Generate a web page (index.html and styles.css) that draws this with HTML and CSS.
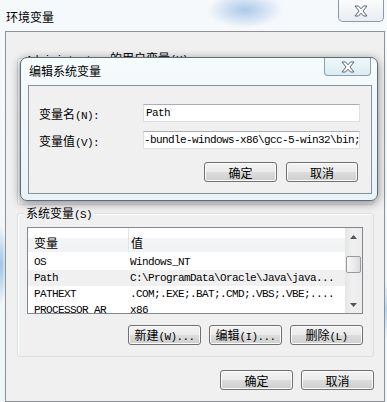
FILE: index.html
```html
<!DOCTYPE html>
<html lang="zh-CN">

<head>
    <meta charset="UTF-8">
    <title>环境变量</title>
    <link rel="stylesheet" href="styles.css">
</head>

<body>
    <div class="window">
        <div class="titlebar">
            <span class="title">环境变量</span>
            <div class="close-btn">
                <svg width="14" height="12" viewBox="0 0 14 12">
                    <polygon points="1,1 4.5,1 7,3.8 9.5,1 13,1 9,6 13,11 9.5,11 7,8.2 4.5,11 1,11 5,6" fill="#fff" stroke="#5a6470" stroke-width="1" stroke-linejoin="round" />
                </svg>
            </div>
        </div>

        <div class="client">
            <!-- 用户变量 (被对话框挡住) -->
            <div class="group user-group">
                <span class="legend"><span class="en">Administrator </span>的用户变量<span class="en">(U)</span></span>
            </div>

            <div class="group sys-group">
                <span class="legend">系统变量<span class="en">(S)</span></span>
                <div class="listview">
                    <div class="lv-body">
                        <div class="lv-head">
                            <div class="col-name">变量</div>
                            <div class="col-value">值</div>
                        </div>
                        <div class="lv-rows">
                            <div class="lv-row">
                                <div class="col-name">OS</div>
                                <div class="col-value">Windows_NT</div>
                            </div>
                            <div class="lv-row hot">
                                <div class="col-name">Path</div>
                                <div class="col-value">C:\ProgramData\Oracle\Java\java...</div>
                            </div>
                            <div class="lv-row">
                                <div class="col-name">PATHEXT</div>
                                <div class="col-value">.COM;.EXE;.BAT;.CMD;.VBS;.VBE;....</div>
                            </div>
                            <div class="lv-row">
                                <div class="col-name">PROCESSOR_AR</div>
                                <div class="col-value">x86</div>
                            </div>
                        </div>
                    </div>
                    <div class="scrollbar">
                        <div class="sb-arrow">
                            <svg width="7" height="4" viewBox="0 0 7 4"><polygon points="0,4 3.5,0 7,4" fill="#555" /></svg>
                        </div>
                        <div class="sb-track">
                            <div class="sb-thumb"></div>
                        </div>
                        <div class="sb-arrow">
                            <svg width="7" height="4" viewBox="0 0 7 4"><polygon points="0,0 3.5,4 7,0" fill="#555" /></svg>
                        </div>
                    </div>
                </div>
                <div class="btn-row">
                    <button class="btn">新建<span class="en">(W)...</span></button>
                    <button class="btn">编辑<span class="en">(I)...</span></button>
                    <button class="btn">删除<span class="en">(L)</span></button>
                </div>
            </div>

            <div class="btn-row main-btns">
                <button class="btn">确定</button>
                <button class="btn">取消</button>
            </div>
        </div>

        <!-- 编辑系统变量 对话框 -->
        <div class="dialog">
            <div class="dlg-titlebar">
                <span class="dlg-title">编辑系统变量</span>
                <div class="dlg-close">
                    <svg width="14" height="12" viewBox="0 0 14 12">
                        <polygon points="1,1 4.5,1 7,3.8 9.5,1 13,1 9,6 13,11 9.5,11 7,8.2 4.5,11 1,11 5,6" fill="#fff" stroke="#5a6470" stroke-width="1" stroke-linejoin="round" />
                    </svg>
                </div>
            </div>
            <div class="dlg-client">
                <div class="field first">
                    <label>变量名<span class="en">(N):</span></label>
                    <div class="textbox">Path</div>
                </div>
                <div class="field">
                    <label>变量值<span class="en">(V):</span></label>
                    <div class="textbox scrolled"><span>-bundle-windows-x86\gcc-5-win32\bin;</span></div>
                </div>
                <div class="btn-row dlg-btns">
                    <button class="btn">确定</button>
                    <button class="btn narrow">取消</button>
                </div>
            </div>
        </div>
    </div>
</body>

</html>
```

FILE: styles.css
```css
body {
    margin: 0;
    width: 387px;
    height: 402px;
    overflow: hidden;
    font-family: "Noto Sans CJK SC", sans-serif;
    font-size: 12px;
    color: #000;
    background:
        radial-gradient(ellipse 38px 18px at 245px 10px, rgba(110, 160, 220, 0.55), transparent),
        radial-gradient(ellipse 6px 40px at 1px 265px, rgba(90, 150, 215, 0.55), transparent),
        radial-gradient(ellipse 6px 30px at 386px 310px, rgba(120, 180, 230, 0.5), transparent),
        linear-gradient(#f6f9fb, #eef6f9);
}

/* 半角字符, 模仿宋体 */
.en {
    font-family: "Liberation Mono", monospace;
    font-size: 11px;
    letter-spacing: -0.6px;
}

.window {
    position: relative;
    height: 402px;
    display: flex;
    flex-direction: column;
}

/* 标题栏 */
.titlebar {
    height: 31px;
    display: flex;
    justify-content: space-between;
    align-items: flex-start;
}

.title {
    margin: 10px 0 0 6px;
    line-height: 14px;
}

.close-btn {
    width: 46px;
    height: 22px;
    margin-right: 3px;
    box-sizing: border-box;
    border: 1px solid #8d99a6;
    border-top: none;
    border-radius: 0 0 5px 5px;
    background: linear-gradient(#fbfcfd, #e8edf1);
    display: flex;
    align-items: center;
    justify-content: center;
}

.client {
    flex: 1;
    margin: 0 2px 0 5px;
    border: 1px solid #8e9296;
    background: #f0f0f0;
}

/* 分组框 */
.group {
    position: relative;
    box-sizing: border-box;
    border: 1px solid #d5dfe5;
    border-radius: 3px;
    box-shadow: inset 1px 1px 0 #fff;
}

.legend {
    position: absolute;
    top: -8px;
    left: 6px;
    padding: 0 2px;
    line-height: 14px;
    background: #f0f0f0;
    white-space: nowrap;
}

.user-group {
    margin: 26px 10px 8px 11px;
    height: 147px;
}

.sys-group {
    margin: 0 10px 0 11px;
    padding: 13px 10px 11px 9px;
}

/* 列表 */
.listview {
    height: 87px;
    box-sizing: border-box;
    border: 1px solid #828790;
    background: #fff;
    display: flex;
}

.lv-body {
    flex: 1;
    overflow: hidden;
}

.lv-head {
    display: flex;
    height: 24px;
    background: linear-gradient(#fff 0%, #fff 42%, #f4f5f6 42%, #f1f2f4 100%);
}

.lv-head .col-name,
.lv-head .col-value {
    padding-top: 7px;
    line-height: 16px;
}

.col-name {
    width: 101px;
    padding-left: 6px;
    box-sizing: border-box;
    flex-shrink: 0;
}

.lv-head .col-name {
    border-right: 1px solid #e3e5e8;
}

.col-value {
    padding-left: 2px;
    white-space: nowrap;
}

.lv-rows {
    padding-top: 2px;
}

.lv-row {
    display: flex;
    height: 16px;
    line-height: 16px;
    font-family: "Liberation Mono", monospace;
    font-size: 11px;
    letter-spacing: -0.6px;
    white-space: nowrap;
}

.lv-row .col-value {
    padding-left: 1px;
}

.lv-row.hot {
    background: #f0f0f0;
}

/* 滚动条 */
.scrollbar {
    width: 17px;
    display: flex;
    flex-direction: column;
    background: linear-gradient(90deg, #e6e6e6, #f0f0f0 40%, #ececec);
}

.sb-arrow {
    height: 17px;
    display: flex;
    align-items: center;
    justify-content: center;
}

.sb-track {
    flex: 1;
}

.sb-thumb {
    margin: 11px 1px 0 1px;
    height: 17px;
    box-sizing: border-box;
    border: 1px solid #979a9e;
    border-radius: 2px;
    background: linear-gradient(90deg, #f7f7f7, #ececec 50%, #dcdcdc);
}

/* 按钮 */
.btn-row {
    display: flex;
    justify-content: flex-end;
    gap: 8px;
    margin-top: 11px;
}

.btn {
    width: 73px;
    height: 20px;
    padding: 0;
    box-sizing: border-box;
    border: 1px solid #707070;
    border-radius: 3px;
    background: linear-gradient(#f2f2f2 0%, #ebebeb 50%, #dddddd 50%, #cfcfcf 100%);
    box-shadow: inset 0 0 0 1px #fbfbfb;
    font-family: "Noto Sans CJK SC", sans-serif;
    font-size: 12px;
    line-height: 17px;
    color: #000;
}

.main-btns {
    margin: 13px 10px 0 0;
}

/* 编辑系统变量 */
.dialog {
    position: absolute;
    left: 20px;
    top: 57px;
    width: 358px;
    height: 144px;
    box-sizing: border-box;
    border: 1px solid #5f6b78;
    border-radius: 7px;
    padding: 0 5px 6px 7px;
    display: flex;
    flex-direction: column;
    background:
        radial-gradient(ellipse 30px 8px at 40px 40px, rgba(150, 190, 220, 0.3), transparent),
        linear-gradient(#f6fbfc, #e8f3f7);
    box-shadow: 0 2px 10px rgba(0, 0, 0, 0.45);
}

.dlg-titlebar {
    height: 27px;
    display: flex;
    justify-content: space-between;
    align-items: flex-start;
}

.dlg-title {
    margin: 6px 0 0 1px;
    line-height: 14px;
}

.dlg-close {
    width: 47px;
    height: 18px;
    margin-right: 1px;
    box-sizing: border-box;
    border: 1px solid #8aa0b2;
    border-top: none;
    border-radius: 0 0 4px 4px;
    background: linear-gradient(#eef7fa, #dcecf2);
    display: flex;
    align-items: center;
    justify-content: center;
}

.dlg-client {
    flex: 1;
    border: 1px solid #89929c;
    background: #f0f0f0;
}

.field {
    display: flex;
    align-items: center;
    margin-top: 9px;
}

.field.first {
    margin-top: 18px;
}

.field label {
    width: 114px;
    padding-left: 10px;
    box-sizing: border-box;
}

.textbox {
    width: 217px;
    height: 18px;
    box-sizing: border-box;
    border: 1px solid #dbdfe6;
    border-top-color: #abadb3;
    background: #fff;
    padding-left: 2px;
    font-family: "Liberation Mono", monospace;
    font-size: 11px;
    letter-spacing: -0.6px;
    line-height: 16px;
    white-space: nowrap;
    overflow: hidden;
}

.textbox.scrolled {
    padding-left: 0;
}

.dlg-btns {
    margin: 13px 13px 0 0;
    gap: 9px;
}

.btn.narrow {
    width: 72px;
}
```
